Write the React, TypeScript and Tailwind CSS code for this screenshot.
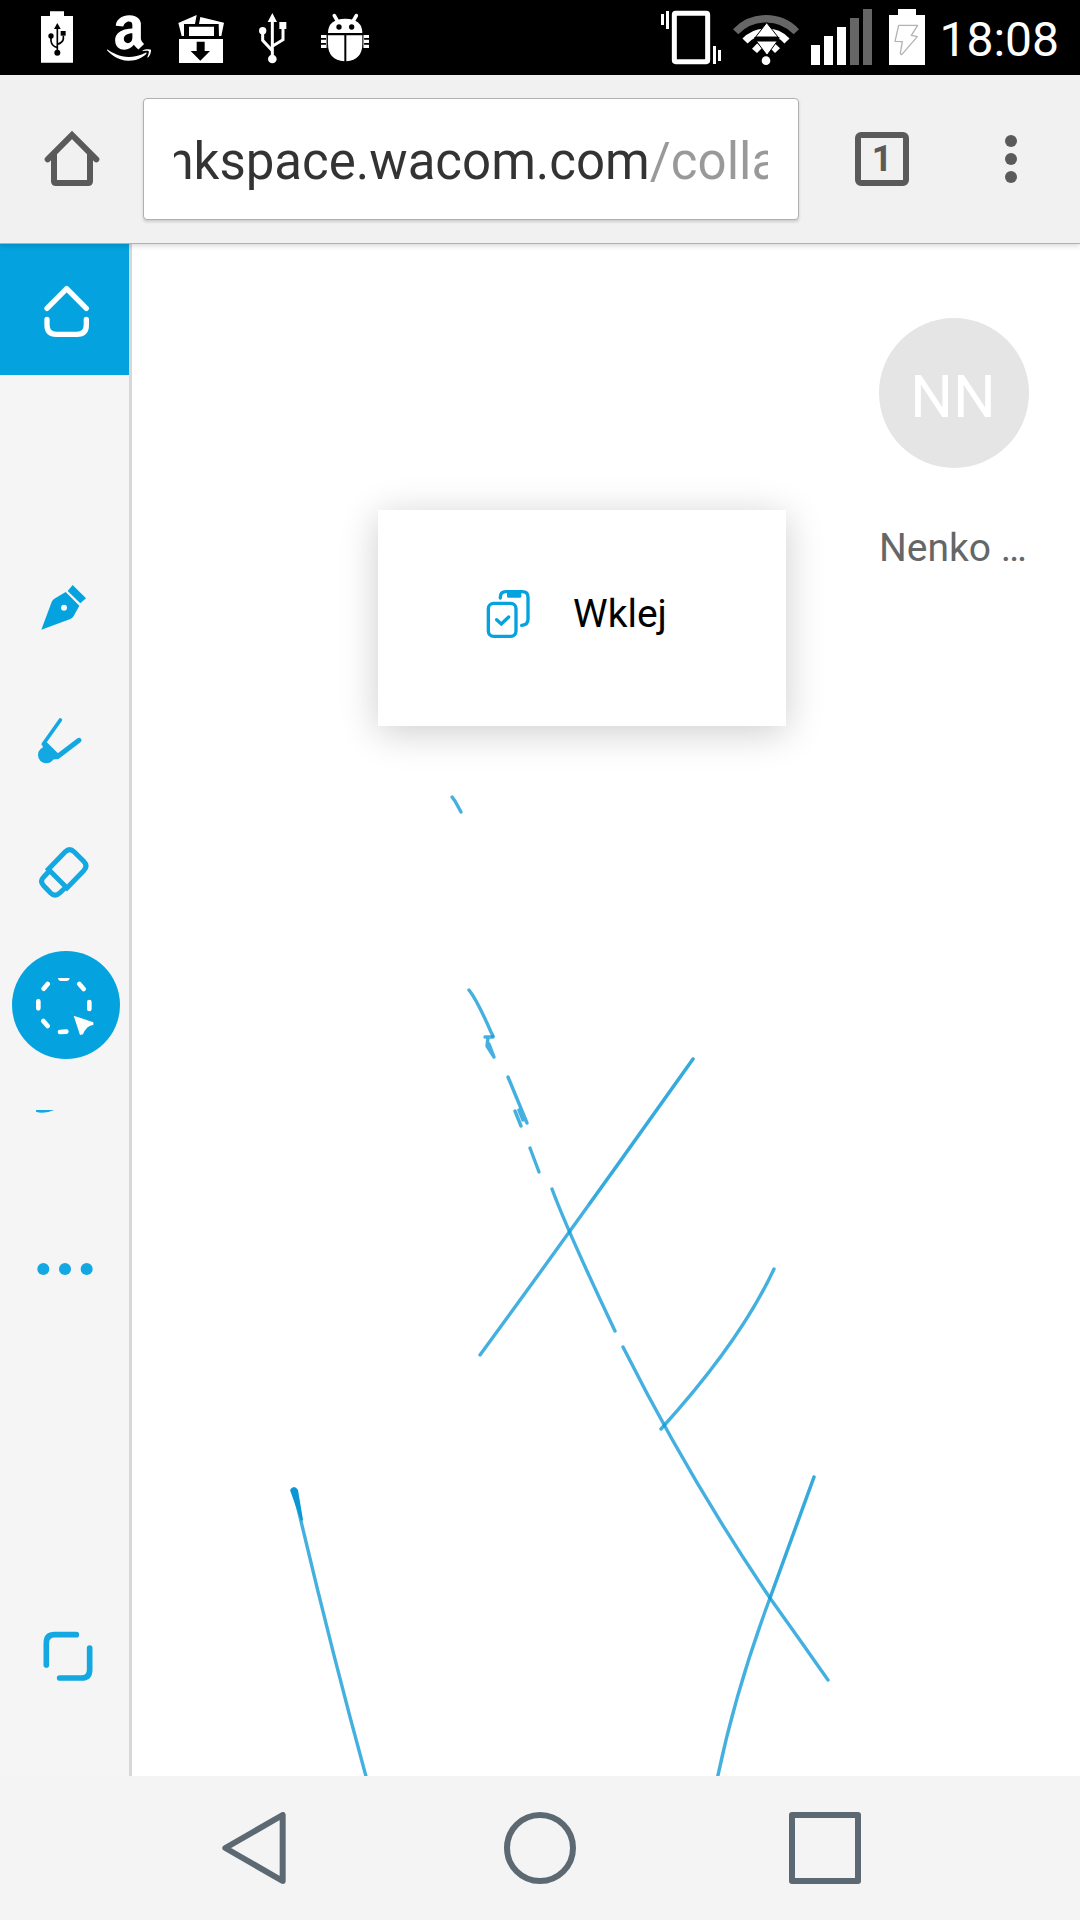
import React from "react";
import { FaAmazon } from "react-icons/fa";

function StatusBar() {
  return (
    <header className="flex h-[75px] shrink-0 items-center bg-black pl-[33px] pr-[21px] text-white">
      <div className="flex items-center gap-6">
        <svg className="h-[59px] w-12" viewBox="99 24 144 177" fill="white" aria-label="USB charging">
          <path d="M150 34h42v14h27v140h-96V48h27z" />
          <g fill="black" stroke="none">
            <path d="M172 69l10 18h-20z" />
            <circle cx="172" cy="158" r="9" />
            <circle cx="153" cy="108" r="8" />
            <path d="M182 93h15v14h-15z" />
          </g>
          <path d="M172 82v76M153 108v15q2 15 19 20M190 107v10q-2 11-18 16" fill="none" stroke="black" strokeWidth="5" />
        </svg>
        <FaAmazon className="h-[52px] w-12" aria-label="Amazon" />
        <svg className="h-[59px] w-12" viewBox="531 24 144 177" fill="white" aria-label="Downloads">
          <path d="M535 69l55-24-5 27h-33v36h-7zM601 51l71 17-8 40h-7l-1-36h-59zM567 80h75v28h-75z" />
          <path d="M537 117h132v72H537z" />
          <path d="M590 125h24v28h16l-29 29-29-29h18z" fill="black" />
        </svg>
        <svg className="h-[59px] w-12" viewBox="747 24 144 177" fill="white" aria-label="USB connected">
          <path d="M817 39l14 27h-28zM838 66h21v21h-21z" />
          <circle cx="817" cy="177" r="13" />
          <circle cx="788" cy="92" r="11" />
          <path d="M817 60v115M788 92v29l29 31M849 86v33l-32 20" fill="none" stroke="white" strokeWidth="9" />
        </svg>
        <svg className="h-[59px] w-12" viewBox="963 24 144 177" fill="white" aria-label="USB debugging">
          <path d="M984 99q0-42 52-43 51 1 51 43zM984 106h49v78q-49-4-49-52zM1039 106h48v26q0 48-48 52z" />
          <path d="M1003 47l10 17M1069 47l-10 17" stroke="white" strokeWidth="11" strokeLinecap="round" />
          <circle cx="1017" cy="81" r="8" fill="black" />
          <circle cx="1055" cy="81" r="8" fill="black" />
          <path d="M963 105h15v9h-15zM963 119h15v10h-15zM963 134h15v10h-15zM1092 105h15v9h-15zM1092 119h15v10h-15zM1092 134h15v10h-15z" />
          <path d="M980 105v39M1091 105v39" stroke="white" strokeWidth="2" />
        </svg>
      </div>
      <div className="ml-auto flex items-center gap-3">
        <svg className="h-[59px] w-[60px]" viewBox="66 24 180 177" fill="white" aria-label="Vibrate">
          <rect x="106" y="40" width="100" height="145" rx="4" fill="none" stroke="white" strokeWidth="15" />
          <path d="M66 42h9v33h-9zM81 33h9v54h-9zM222 138h9v54h-9zM237 150h9v33h-9z" />
        </svg>
        <svg className="h-[59px] w-[66px]" viewBox="279 24 198 177" fill="white" aria-label="Wi-Fi">
          <path d="M287 95a126 126 0 0 1 182 0" fill="none" stroke="#666" strokeWidth="22" />
          <path d="M315 123a86 86 0 0 1 126 0" fill="none" stroke="white" strokeWidth="21" />
          <path d="M352 130l14 14-15 15-15-13zM404 130l16 15-15 14-14-14z" />
          <path d="M380 68l34 43h-67zM349 123h63l-31 43z" stroke="black" strokeWidth="3" />
          <path d="M343 111h75v11h-75z" fill="black" />
          <circle cx="378" cy="182" r="13" />
        </svg>
        <svg className="h-[59px] w-[61px]" viewBox="513 24 183 177" fill="white" aria-label="Signal strength">
          <path d="M513 135h27v60h-27zM552 108h27v87h-27zM591 81h27v114h-27z" />
          <path d="M630 54h27v141h-27zM669 27h27v168h-27z" fill="#666" />
        </svg>
        <svg className="h-[59px] w-[43px]" viewBox="732 24 129 177" fill="white" aria-label="Charging">
          <path d="M774 27h54v18h27v150H747V45h27z" />
          <path d="M776 76h57l-19 30 18 4-46 53q-5 2-5-4l6-34-22-1z" fill="none" stroke="#b3b3b3" strokeWidth="4" strokeLinejoin="round" />
        </svg>
        <time className="pt-1 text-[48px] leading-[56px]">18:08</time>
      </div>
    </header>
  );
}

function BrowserBar() {
  return (
    <nav className="z-10 flex h-[169px] shrink-0 items-center border-b border-[#b0b0b0] bg-[#f1f1f1] pr-[23px] shadow-[0_2px_5px_rgba(0,0,0,0.15)]">
      <button aria-label="Home page" className="flex h-full w-[143px] items-center justify-center">
        <svg className="h-[60px] w-[60px]" viewBox="126 387 180 180" fill="none" stroke="#5a5a5a" strokeWidth="18">
          <path d="M143 478l73-73 73 73" strokeLinecap="round" />
          <path d="M162 460v83q0 6 6 6h96q6 0 6-6v-83" />
        </svg>
      </button>
      <div className="flex h-[122px] min-w-0 flex-1 items-center rounded-[4px] border border-[#b0b0b0] bg-white px-[30px] pt-1.5 shadow-[0_2px_3px_rgba(0,0,0,0.15)]">
        <div className="flex min-w-0 flex-1 overflow-hidden">
          <input
            aria-label="Address"
            type="text"
            defaultValue="inkspace.wacom.com/collaboration"
            className="-ml-[21px] h-[70px] min-w-0 flex-1 bg-[linear-gradient(90deg,#333333_495px,#999999_495px)] bg-clip-text text-[51px] text-transparent outline-none"
          />
        </div>
      </div>
      <button aria-label="Open tabs: 1" className="flex h-full w-[166px] items-center justify-center">
        <span className="flex h-[54px] w-[54px] items-center justify-center rounded-[6px] border-[6px] border-[#5a5a5a] text-[36px] leading-[42px] font-bold text-[#5a5a5a]">
          1
        </span>
      </button>
      <button aria-label="Menu" className="flex h-full w-[92px] flex-col items-center justify-center gap-[6px]">
        <span className="h-3 w-3 rounded-full bg-[#5a5a5a]" />
        <span className="h-3 w-3 rounded-full bg-[#5a5a5a]" />
        <span className="h-3 w-3 rounded-full bg-[#5a5a5a]" />
      </button>
    </nav>
  );
}

function Tool({ label, children }: { label: string; children: React.ReactNode }) {
  return (
    <button aria-label={label} className="flex h-[132px] w-full shrink-0 items-center justify-center">
      {children}
    </button>
  );
}

function Sidebar() {
  return (
    <aside className="flex w-[132px] shrink-0 flex-col bg-[#f5f5f5] shadow-[inset_-3px_0_0_#d7d7d7]">
      <button aria-label="Inkspace home" className="mr-[3px] flex h-[131px] items-center justify-center bg-[#04a3e0]">
        <svg className="h-[61px] w-[61px]" viewBox="102 147 183 183" fill="none" stroke="white" strokeWidth="16" strokeLinecap="round">
          <path d="M141 235l59-59 59 59" strokeLinejoin="round" />
          <path d="M141 268v17q0 28 28 28h62q28 0 28-28v-17" />
        </svg>
      </button>
      <div className="mt-[165px] flex flex-col gap-px">
        <Tool label="Pen">
          <svg className="h-[60px] w-[60px]" viewBox="108 48 180 180" fill="#04a3e0">
            <path d="M124 209l31-83q2-6 8-10l34-20 41 41-17 31q-3 6-10 9z" />
            <path d="M218 75l40 40-17 15-38-37z" />
            <circle cx="192" cy="143" r="9" fill="#f5f5f5" />
          </svg>
        </Tool>
        <Tool label="Brush">
          <svg className="h-[60px] w-[60px]" viewBox="108 447 180 180" fill="#13a8e1" stroke="#13a8e1" strokeLinecap="round">
            <path d="M181 480l-51 72" strokeWidth="11" />
            <path d="M237 541l-65 49" strokeWidth="15" />
            <circle cx="139" cy="585" r="25" stroke="none" />
            <path d="M127 552l12-7 38 38-5 14-22 3-20-30z" stroke="none" />
          </svg>
        </Tool>
        <Tool label="Eraser">
          <svg className="h-[60px] w-[60px]" viewBox="108 846 180 180" fill="none" stroke="#13a8e1" strokeWidth="15">
            <path d="M145 928l50-52q14-14 28 0l28 28q14 14 0 28l-50 52z" />
            <path d="M148 933l-17 18q-13 13 0 26l21 22q13 13 27 0l16-15" />
          </svg>
        </Tool>
        <Tool label="Select">
          <span className="flex h-[108px] w-[108px] items-center justify-center rounded-full bg-[#04a3e0]">
            <svg className="h-[60px] w-[60px]" viewBox="108 135 180 180" fill="white">
              <path d="M174 144h35q-1 9-10 9h-16q-8 0-9-9z" />
              <path d="M238 162l13 15M268 216v21M143 162l-12 14M115 214v21M130 273l13 15M180 306l19-1" fill="none" stroke="white" strokeWidth="14" strokeLinecap="round" />
              <path d="M221 257l59 20v8q-16 3-21 11-7 6-10 17l-9 2z" />
            </svg>
          </span>
        </Tool>
        <Tool label="Color">
          <svg className="h-[60px] w-[60px]" viewBox="108 534 180 180" fill="#13a8e1">
            <path d="M108 540h55q-18 8-36 8-11 0-19-3z" />
          </svg>
        </Tool>
        <Tool label="More">
          <svg className="h-[60px] w-[60px]" viewBox="108 933 180 180" fill="#13a8e1">
            <circle cx="130" cy="1017" r="18" />
            <circle cx="195" cy="1017" r="18" />
            <circle cx="260" cy="1017" r="18" />
          </svg>
        </Tool>
      </div>
      <div className="mt-auto mb-[54px]">
        <Tool label="Full screen">
          <svg className="h-[60px] w-[60px]" viewBox="108 78 180 180" fill="none" stroke="#13a8e1" strokeWidth="17" strokeLinecap="round">
            <path d="M139 195v-66q0-25 25-25h65M269 144v65q0 25-25 25h-65" />
          </svg>
        </Tool>
      </div>
    </aside>
  );
}

function Ink() {
  return (
    <svg
      aria-hidden="true"
      className="pointer-events-none absolute top-0 left-0 h-[1532px] w-[948px]"
      viewBox="132 244 948 1532"
      fill="none"
      stroke="#0f9ad7"
      strokeWidth="3.4"
      strokeOpacity="0.78"
      strokeLinecap="round"
      strokeLinejoin="round"
    >
      <path d="M452 797L455 801L461 812" />
      <path d="M469 990Q477 1000 491 1032L493 1036" />
      <path d="M485 1037H493M488 1038L487 1046L494 1057M489 1044L494 1057" />
      <path d="M508 1077L527 1123M515 1111L521 1126M519 1110L523 1120" />
      <path d="M530 1148L539 1172" />
      <path d="M552 1189Q568 1232 615 1331" />
      <path d="M623 1347Q690 1480 770 1598Q800 1640 828 1680" />
      <path d="M693 1059Q586 1210 480 1355" />
      <path d="M693 1059L590 1203" strokeOpacity="0.3" />
      <path d="M774 1269Q740 1342 661 1429" />
      <path d="M814 1477L770 1598Q735 1692 717 1780" />
      <path d="M814 1477L770 1598" strokeOpacity="0.3" />
      <path d="M296 1500Q331 1649 367 1780" />
      <path d="M290 1490Q294 1484 298 1490L303 1520L301 1521Z" fill="#0a97d4" stroke="none" />
    </svg>
  );
}

function Canvas() {
  return (
    <main className="relative min-w-0 flex-1 overflow-hidden bg-white">
      <Ink />
      <div className="flex justify-end pt-[74px] pr-[51px]">
        <figure className="flex w-[150px] flex-col gap-[57px]">
          <div className="flex h-[150px] w-[150px] items-center justify-center rounded-full bg-[#e5e5e5] pt-2 pr-0.5 text-[60px] leading-[70px] text-white">
            NN
          </div>
          <figcaption className="text-[39px] leading-[46px] whitespace-nowrap text-[#666666]">Nenko …</figcaption>
        </figure>
      </div>
      <div
        role="menu"
        className="absolute top-[266px] left-[246px] flex w-[408px] items-center justify-center bg-white pt-[66px] pb-[74px] shadow-[0_6px_36px_rgba(0,0,0,0.2)]"
      >
        <button role="menuitem" className="flex h-[76px] items-center gap-[42px] pr-3 text-[39px] leading-[46px] text-black">
          <svg className="h-[50px] w-[46px]" viewBox="345 267 138 150" fill="none" stroke="#04a3e0" strokeWidth="10" aria-hidden="true">
            <rect x="355" y="310" width="83" height="99" rx="16" />
            <path d="M391 294v-2q0-17 17-17h49q17 0 17 17v66q0 17-19 18" strokeLinecap="round" />
            <path d="M411 272h43v17q0 4-4 4h-35q-4 0-4-4z" fill="#04a3e0" stroke="none" />
            <path d="M380 359l14 13 22-21" strokeWidth="10" strokeLinecap="round" />
          </svg>
          Wklej
        </button>
      </div>
    </main>
  );
}

function SystemNav() {
  return (
    <footer className="flex h-36 shrink-0 items-center justify-between bg-[#f4f4f4] pr-[219px] pl-[218px]">
      <button aria-label="Back">
        <svg className="h-[72px] w-[72px]" viewBox="654 636 216 216" fill="none" stroke="#5c6972" strokeWidth="18" strokeLinejoin="round">
          <path d="M676 744l172-99v198z" />
        </svg>
      </button>
      <button aria-label="Home" className="h-[72px] w-[72px] rounded-full border-[6px] border-[#5c6972]" />
      <button aria-label="Recent apps" className="h-[72px] w-[72px] rounded-[3px] border-[6px] border-[#5c6972]" />
    </footer>
  );
}

export default function App() {
  return (
    <div className="flex min-h-screen flex-col bg-white font-[Roboto,sans-serif]">
      <StatusBar />
      <BrowserBar />
      <div className="flex flex-1">
        <Sidebar />
        <Canvas />
      </div>
      <SystemNav />
    </div>
  );
}
